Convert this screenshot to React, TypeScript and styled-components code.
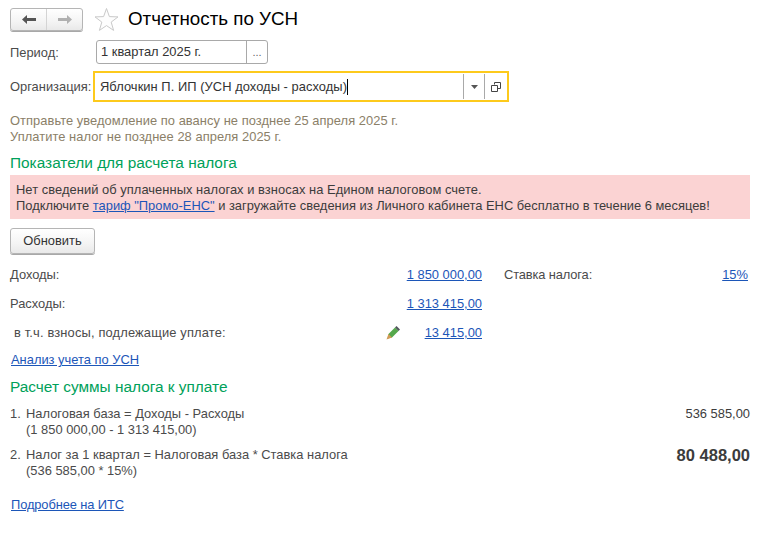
import React from "react";
import styled, { createGlobalStyle } from "styled-components";

const GlobalStyle = createGlobalStyle`
  html, body {
    margin: 0;
    padding: 0;
    background: #fff;
  }
  body {
    font-family: "Liberation Sans", Arial, sans-serif;
    font-size: 12.9px;
    color: #4b4b4b;
  }
`;

const Page = styled.div`
  width: 767px;
  height: 535px;
  box-sizing: border-box;
  padding: 7px 17px 0 10px;
  overflow: hidden;
  display: flex;
  flex-direction: column;
`;

const Header = styled.div`
  display: flex;
  align-items: center;
  height: 24px;
`;

const NavGroup = styled.div`
  display: flex;
  width: 73px;
  height: 23px;
  box-sizing: border-box;
  border: 1px solid #b5b5b5;
  border-radius: 3px;
  background: linear-gradient(#ffffff, #f4f4f4 60%, #e9e9e9);
  box-shadow: 0 1px 0 #a8a8a8;
`;

const NavButton = styled.div<{ $divider?: boolean }>`
  flex: 1;
  display: flex;
  align-items: center;
  justify-content: center;
  border-left: ${(p) => (p.$divider ? "1px solid #d4d4d4" : "none")};
`;

const StarIcon = styled.svg`
  margin-left: 11px;
  width: 25px;
  height: 25px;
`;

const Title = styled.h1`
  margin: 0 0 0 9px;
  font-size: 18.8px;
  font-weight: 400;
  color: #000;
  line-height: 24px;
`;

const FormRow = styled.div<{ $top: number }>`
  display: flex;
  align-items: center;
  margin-top: ${(p) => p.$top}px;
`;

const FieldLabel = styled.div<{ $width: number }>`
  width: ${(p) => p.$width}px;
  color: #4b4b4b;
`;

const PeriodField = styled.div`
  display: flex;
  width: 172px;
  height: 24px;
  box-sizing: border-box;
  border: 1px solid #a9a9a9;
  border-radius: 3px;
  color: #333;
`;

const PeriodValue = styled.div`
  flex: 1;
  padding-left: 4px;
  line-height: 22px;
`;

const PeriodPick = styled.div`
  width: 20px;
  border-left: 1px solid #a9a9a9;
  text-align: center;
  line-height: 22px;
  color: #666;
  font-size: 11px;
`;

const OrgField = styled.div`
  display: flex;
  align-items: stretch;
  width: 416px;
  height: 31px;
  box-sizing: border-box;
  border: 2px solid #fdca1c;
  color: #333;
`;

const OrgValue = styled.div`
  flex: 1;
  display: flex;
  align-items: center;
  padding-left: 5px;
  letter-spacing: 0.05px;
`;

const Caret = styled.span`
  width: 1px;
  height: 16px;
  background: #000;
`;

const OrgAction = styled.div<{ $width: number }>`
  width: ${(p) => p.$width}px;
  margin: 1px 0;
  border-left: 1px solid #a9a9a9;
  display: flex;
  align-items: center;
  justify-content: center;
`;

const Notes = styled.div`
  margin-top: 11px;
  color: #8b8068;
  line-height: 16px;
  letter-spacing: 0.05px;
`;

const SectionTitle = styled.h2<{ $top: number }>`
  margin: ${(p) => p.$top}px 0 0;
  font-size: 15.4px;
  font-weight: 400;
  line-height: 18px;
  color: #00a15a;
`;

const Alert = styled.div`
  margin-top: 3px;
  height: 44px;
  box-sizing: border-box;
  padding: 7px 6px 0;
  background: #fbd3d3;
  color: #3c3c3c;
  line-height: 16px;
`;

const AlertLead = styled.div`
  letter-spacing: 0.05px;
`;

const Link = styled.a`
  color: #1c56b8;
  text-decoration: underline;
`;

const RefreshButton = styled.div`
  margin-top: 9px;
  width: 85px;
  height: 26px;
  box-sizing: border-box;
  border: 1px solid #b5b5b5;
  border-radius: 3px;
  background: linear-gradient(#ffffff, #f4f4f4 60%, #e9e9e9);
  box-shadow: 0 1px 0 #a8a8a8;
  text-align: center;
  line-height: 24px;
  color: #333;
`;

const Figures = styled.div`
  margin-top: 6px;
  display: grid;
  grid-template-columns: 472px 244px;
  grid-auto-rows: 29px;
  column-gap: 22px;
  align-items: center;
`;

const FigureCell = styled.div`
  display: flex;
  align-items: center;
  justify-content: space-between;
`;

const RateLabel = styled.span`
  letter-spacing: -0.14px;
`;

const SubLabel = styled.span`
  padding-left: 4px;
  flex: 1;
  letter-spacing: 0.15px;
`;

const PencilIcon = styled.svg`
  width: 14px;
  height: 14px;
  margin-right: 25px;
`;

const PlainLink = styled(Link)<{ $top: number; $tight?: boolean }>`
  display: block;
  padding-left: 1px;
  margin-top: ${(p) => p.$top}px;
  letter-spacing: ${(p) => (p.$tight ? "-0.12px" : "0")};
`;

const CalcRow = styled.div<{ $top: number }>`
  display: flex;
  justify-content: space-between;
  align-items: flex-start;
  margin-top: ${(p) => p.$top}px;
  line-height: 16px;
`;

const CalcText = styled.div`
  display: grid;
  grid-template-columns: 16px auto;
  color: #4b4b4b;
`;

const CalcAmount = styled.div<{ $big?: boolean }>`
  font-size: ${(p) => (p.$big ? "16.5px" : "12.9px")};
  font-weight: ${(p) => (p.$big ? 700 : 400)};
  color: #3c3c3c;
`;

const Arrow = ({ dir, color }: { dir: "left" | "right"; color: string }) => (
  <svg width="14" height="9" viewBox="0 0 14 9">
    <path
      d={dir === "left" ? "M0 4.5 L5 0 V3 H14 V6 H5 V9 Z" : "M14 4.5 L9 0 V3 H0 V6 H9 V9 Z"}
      fill={color}
    />
  </svg>
);

export default function App() {
  return (
    <Page>
      <GlobalStyle />
      <Header>
        <NavGroup>
          <NavButton>
            <Arrow dir="left" color="#555" />
          </NavButton>
          <NavButton $divider>
            <Arrow dir="right" color="#b0b0b0" />
          </NavButton>
        </NavGroup>
        <StarIcon viewBox="0 0 25 25">
          <path
            d="M12.5 1.5 L15.4 9.6 L24 9.9 L17.2 15.1 L19.6 23.4 L12.5 18.6 L5.4 23.4 L7.8 15.1 L1 9.9 L9.6 9.6 Z"
            fill="#fdfdfd"
            stroke="#c9c9c9"
            strokeWidth="1"
          />
        </StarIcon>
        <Title>Отчетность по УСН</Title>
      </Header>

      <FormRow $top={9}>
        <FieldLabel $width={86}>Период:</FieldLabel>
        <PeriodField>
          <PeriodValue>1 квартал 2025 г.</PeriodValue>
          <PeriodPick>...</PeriodPick>
        </PeriodField>
      </FormRow>

      <FormRow $top={7}>
        <FieldLabel $width={83}>Организация:</FieldLabel>
        <OrgField>
          <OrgValue>
            Яблочкин П. ИП (УСН доходы - расходы)
            <Caret />
          </OrgValue>
          <OrgAction $width={20}>
            <svg width="7" height="4" viewBox="0 0 7 4">
              <path d="M0 0 H7 L3.5 4 Z" fill="#555" />
            </svg>
          </OrgAction>
          <OrgAction $width={22}>
            <svg width="10" height="10" viewBox="0 0 10 10" fill="none" stroke="#444">
              <path d="M3.5 2.5 V0.5 H9.5 V6.5 H7" />
              <path d="M0.5 3.5 H6.5 V9.5 H0.5 Z" />
            </svg>
          </OrgAction>
        </OrgField>
      </FormRow>

      <Notes>
        <div>Отправьте уведомление по авансу не позднее 25 апреля 2025 г.</div>
        <div>Уплатите налог не позднее 28 апреля 2025 г.</div>
      </Notes>

      <SectionTitle $top={9}>Показатели для расчета налога</SectionTitle>
      <Alert>
        <AlertLead>Нет сведений об уплаченных налогах и взносах на Едином налоговом счете.</AlertLead>
        <div>
          Подключите <Link>тариф "Промо-ЕНС"</Link> и загружайте сведения из Личного кабинета ЕНС
          бесплатно в течение 6 месяцев!
        </div>
      </Alert>

      <RefreshButton>Обновить</RefreshButton>

      <Figures>
        <FigureCell>
          <span>Доходы:</span>
          <Link>1 850 000,00</Link>
        </FigureCell>
        <FigureCell>
          <RateLabel>Ставка налога:</RateLabel>
          <Link>15%</Link>
        </FigureCell>
        <FigureCell>
          <span>Расходы:</span>
          <Link>1 313 415,00</Link>
        </FigureCell>
        <div />
        <FigureCell>
          <SubLabel>в т.ч. взносы, подлежащие уплате:</SubLabel>
          <PencilIcon viewBox="0 0 14 14">
            <path d="M1.5 12.5 L2.5 8 L9 1.5 L12.5 5 L6 11.5 Z" fill="#55a84c" />
            <path d="M9 1.5 L10.5 0 L14 3.5 L12.5 5 Z" fill="#50565c" />
            <path d="M0.5 13.5 L2.5 8 L6 11.5 Z" fill="#d39a55" />
          </PencilIcon>
          <Link>13 415,00</Link>
        </FigureCell>
      </Figures>

      <PlainLink $top={5}>Анализ учета по УСН</PlainLink>

      <SectionTitle $top={11}>Расчет суммы налога к уплате</SectionTitle>

      <CalcRow $top={10}>
        <CalcText>
          <span>1.</span>
          <span>Налоговая база = Доходы - Расходы</span>
          <span />
          <span>(1 850 000,00 - 1 313 415,00)</span>
        </CalcText>
        <CalcAmount>536 585,00</CalcAmount>
      </CalcRow>

      <CalcRow $top={9}>
        <CalcText>
          <span>2.</span>
          <span>Налог за 1 квартал = Налоговая база * Ставка налога</span>
          <span />
          <span>(536 585,00 * 15%)</span>
        </CalcText>
        <CalcAmount $big>80 488,00</CalcAmount>
      </CalcRow>

      <PlainLink $top={18} $tight>
        Подробнее на ИТС
      </PlainLink>
    </Page>
  );
}
